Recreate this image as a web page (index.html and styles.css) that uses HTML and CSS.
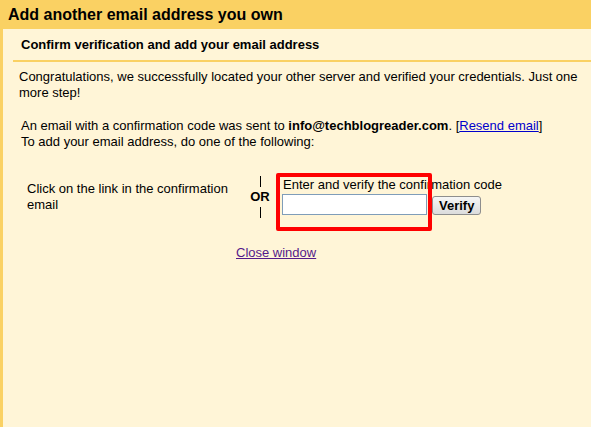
FILE: index.html
```html
<!DOCTYPE html>
<html lang="en">
<head>
    <meta charset="UTF-8">
    <title>Add another email address you own</title>
    <link rel="stylesheet" href="styles.css">
</head>
<body>
    <div class="title">Add another email address you own</div>
    <div class="panel">
        <div class="subhead">Confirm verification and add your email address</div>
        <div class="content">
            <p class="intro">Congratulations, we successfully located your other server and verified your credentials. Just one more step!</p>
            <p class="sent">An email with a confirmation code was sent to <b>info@techblogreader.com</b>. [<a href="#" class="link">Resend email</a>]<br>To add your email address, do one of the following:</p>
            <div class="options">
                <div class="opt-link">Click on the link in the confirmation email</div>
                <div class="or">
                    <span class="bar"></span>
                    <b>OR</b>
                    <span class="bar"></span>
                </div>
                <div class="opt-code">
                    <div class="label">Enter and verify the confirmation code</div>
                    <div class="code-row">
                        <input type="text" class="code-input">
                        <button class="verify">Verify</button>
                    </div>
                    <div class="highlight"></div>
                </div>
            </div>
            <div class="close"><a href="#" class="visited">Close window</a></div>
        </div>
    </div>
</body>
</html>
```
FILE: styles.css
```css
html, body { height: 100%; }
body { margin: 0; background: #fff5d7; font-family: "Liberation Sans", Arial, sans-serif; font-size: 13px; color: #000; display: flex; flex-direction: column; }
.title { background: #fad163; height: 29px; box-sizing: border-box; padding: 5px 0 0 8px; font-size: 16px; font-weight: bold; line-height: 19px; }
.panel { flex: 1; border-left: 3px solid #fad163; }
.subhead { margin-left: 10px; padding: 7px 0 7px 8px; border-bottom: 2px solid #fad163; font-weight: bold; line-height: 17px; }
.content { padding: 7px 0 0 16px; line-height: 16px; }
.content p { margin: 0; }
.sent { margin-top: 17px !important; padding-left: 2px; }
.link { color: #0000cc; }
.visited { color: #551a8b; }
.options { display: flex; align-items: center; margin-top: 26px; padding-left: 8px; }
.opt-link { width: 212px; }
.or { width: 36px; display: flex; flex-direction: column; align-items: center; gap: 3px; line-height: 14px; margin-left: 3px; }
.bar { width: 1px; height: 11px; background: #000; }
.opt-code { position: relative; margin-left: 4px; margin-bottom: 2px; }
.label { padding-left: 1px; }
.code-row { display: flex; align-items: center; gap: 5px; margin-top: 1px; }
.code-input { width: 145px; height: 21px; box-sizing: border-box; border: 1px solid #7f9db9; background: #fff; margin: 0; padding: 1px 3px; font-size: 13px; }
.verify { height: 19px; box-sizing: border-box; padding: 0 6px; border: 1px solid #8e8e8e; border-radius: 3px; background: linear-gradient(#f6f6f6, #dcdcdc); font-family: "Liberation Sans", Arial, sans-serif; font-weight: bold; font-size: 13px; line-height: 16px; margin-top: 2px; }
.highlight { position: absolute; left: -6px; top: -4px; width: 156px; height: 58px; box-sizing: border-box; border: 4px solid #ff0000; border-radius: 2px; }
.close { margin-top: 27px; padding-left: 217px; }
```
